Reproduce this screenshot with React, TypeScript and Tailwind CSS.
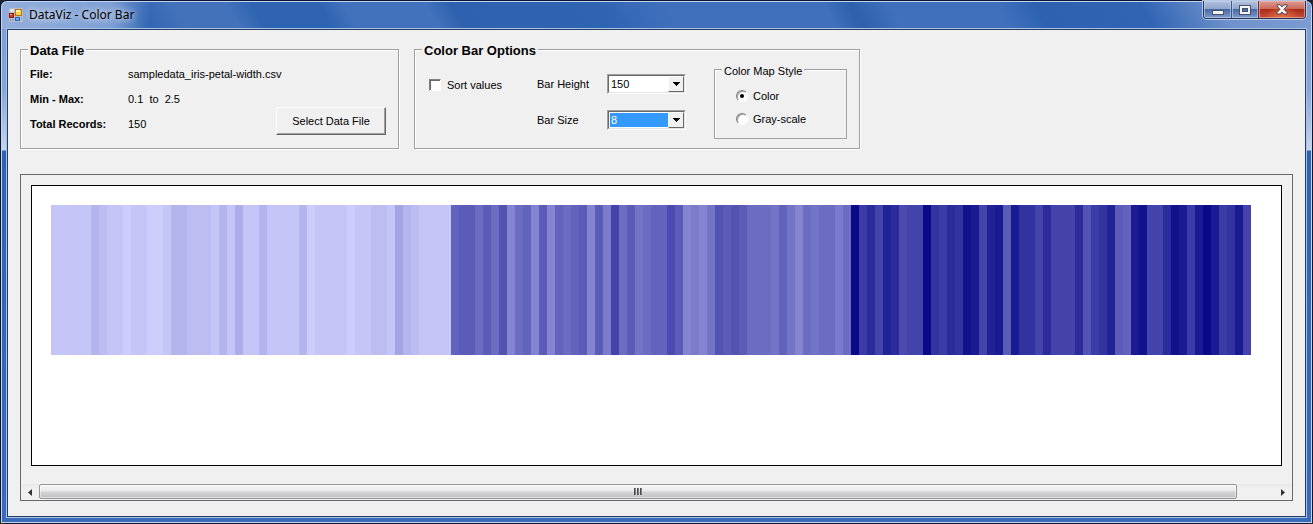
import { useState } from 'react';

const SETOSA = [
  0.2, 0.2, 0.2, 0.2, 0.2, 0.4, 0.3, 0.2, 0.2, 0.1, 0.2, 0.2, 0.1, 0.1, 0.2, 0.4, 0.4, 0.3, 0.3, 0.3, 0.2, 0.4, 0.2, 0.5, 0.2,
  0.2, 0.4, 0.2, 0.2, 0.2, 0.2, 0.4, 0.1, 0.2, 0.2, 0.2, 0.2, 0.1, 0.2, 0.2, 0.3, 0.3, 0.2, 0.6, 0.4, 0.3, 0.2, 0.2, 0.2, 0.2,
];
const VERSICOLOR = [
  1.4, 1.5, 1.5, 1.3, 1.5, 1.3, 1.6, 1.0, 1.3, 1.4, 1.0, 1.5, 1.0, 1.4, 1.3, 1.4, 1.5, 1.0, 1.5, 1.1, 1.8, 1.3, 1.5, 1.2, 1.3,
  1.4, 1.4, 1.7, 1.5, 1.0, 1.1, 1.0, 1.2, 1.6, 1.5, 1.6, 1.5, 1.3, 1.3, 1.3, 1.2, 1.4, 1.2, 1.0, 1.3, 1.2, 1.3, 1.3, 1.1, 1.3,
];
const VIRGINICA = [
  2.5, 1.9, 2.1, 1.8, 2.2, 2.1, 1.7, 1.8, 1.8, 2.5, 2.0, 1.9, 2.1, 2.0, 2.4, 2.3, 1.8, 2.2, 2.3, 1.5, 2.3, 2.0, 2.0, 1.8, 2.1,
  1.8, 1.8, 1.8, 2.1, 1.6, 1.9, 2.0, 2.2, 1.5, 1.4, 2.3, 2.4, 1.8, 1.8, 2.1, 2.4, 2.3, 1.9, 2.3, 2.5, 2.3, 1.9, 2.0, 2.3, 1.8,
];
const VALUES = [...SETOSA, ...VERSICOLOR, ...VIRGINICA];
const MIN = Math.min(...VALUES);
const MAX = Math.max(...VALUES);

function colorFor(value: number, gray: boolean) {
  const t = (value - MIN) / (MAX - MIN);
  const level = Math.round(205 - 195 * t);
  return gray ? `rgb(${level},${level},${level})` : `rgb(${level},${level},${Math.round(252 - 116 * t)})`;
}

function AppIcon() {
  return (
    <svg width="14" height="14" viewBox="0 0 14 14" shapeRendering="crispEdges" aria-hidden="true">
      <rect width="14" height="14" fill="#b9bfc9" />
      <rect x="1" y="1" width="4" height="3" fill="#dfe3ea" />
      <rect x="6" y="1" width="7" height="7" fill="#b07a10" />
      <rect x="7" y="2" width="5" height="5" fill="#f8cf4a" />
      <rect x="7" y="2" width="4" height="2" fill="#fff0a6" />
      <rect x="0" y="5" width="5" height="5" fill="#9c1410" />
      <rect x="1" y="6" width="3" height="3" fill="#d93a2c" />
      <rect x="1" y="6" width="2" height="1" fill="#f5a79c" />
      <rect x="6" y="9" width="5" height="4" fill="#2a62c0" />
      <rect x="7" y="10" width="3" height="2" fill="#6ea6f2" />
      <rect x="1" y="11" width="1" height="2" fill="#7590bd" />
      <rect x="3" y="11" width="2" height="2" fill="#8fa3c6" />
      <rect x="12" y="9" width="1" height="3" fill="#8fa3c6" />
    </svg>
  );
}

function TitleBar() {
  return (
    <header className="flex h-7 items-start justify-between pl-1">
      <div className="flex h-7 items-center gap-1.5 pb-px">
        <AppIcon />
        <h1 className="font-['Noto_Sans',sans-serif] text-[12px] leading-4 text-black [text-shadow:0_0_6px_#ffffffcc,0_0_10px_#ffffffaa]">
          DataViz - Color Bar
        </h1>
      </div>
      <div className="mr-0.5 flex h-[18px] overflow-hidden rounded-b-[4px] border border-t-0 border-[#26365c] shadow-[0_0_0_1px_#b4c8e6]">
        <button
          type="button"
          aria-label="Minimize"
          className="flex w-7 items-center justify-center border-r border-[#3d5687] bg-[linear-gradient(#b3c2dd_0%,#8fa5cd_45%,#4a6aa5_50%,#7d9bcd_100%)] shadow-[inset_0_0_0_1px_#c8d5ea99]"
        >
          <svg width="12" height="12" viewBox="0 0 12 12" shapeRendering="crispEdges" aria-hidden="true">
            <rect x="0.5" y="6.5" width="11" height="4" fill="#f4f4f4" stroke="#46506a" />
          </svg>
        </button>
        <button
          type="button"
          aria-label="Maximize"
          className="flex w-[27px] items-center justify-center border-r border-[#7a2a2a] bg-[linear-gradient(#b3c2dd_0%,#8fa5cd_45%,#4a6aa5_50%,#7d9bcd_100%)] shadow-[inset_0_0_0_1px_#c8d5ea99]"
        >
          <svg width="12" height="10" viewBox="0 0 12 10" shapeRendering="crispEdges" aria-hidden="true">
            <path d="M.5 .5h11v9h-11z M3.5 3.5v3h5v-3z" fillRule="evenodd" fill="#f4f4f4" stroke="#46506a" />
          </svg>
        </button>
        <button
          type="button"
          aria-label="Close"
          className="flex w-[46px] items-center justify-center bg-[radial-gradient(ellipse_at_50%_110%,#e8763f_0%,transparent_55%),linear-gradient(#dd9c92_0%,#cb6a5c_45%,#a92a18_50%,#c6503b_100%)] shadow-[inset_0_0_0_1px_#f0b8a899]"
        >
          <svg width="12" height="11" viewBox="0 0 12 11" aria-hidden="true">
            <path
              d="M1 .8h3.2L6 2.9 7.8 .8H11v1.2L8 5.3l3 3.3v1.4H7.8L6 7.9 4.2 10H1V8.600l3-3.300-3-3.300z"
              fill="#f7f7f7"
              stroke="#4d4658"
            />
          </svg>
        </button>
      </div>
    </header>
  );
}

const GROUP = 'border border-[#a0a0a0] shadow-[1px_1px_0_#fff,inset_1px_1px_0_#fff]';
const GROUP_LEGEND = 'absolute -top-[7px] left-[7px] bg-[#f0f0f0] px-0.5 text-[13px] leading-4 font-bold';

function Field({ label, value }: { label: string; value: string }) {
  return (
    <div className="flex h-[25px] items-start">
      <dt className="w-[98px] font-bold">{label}</dt>
      <dd className="whitespace-pre">{value}</dd>
    </div>
  );
}

function DataFileGroup() {
  return (
    <fieldset className={`relative flex h-[100px] w-[379px] px-[9px] ${GROUP}`}>
      <legend className={GROUP_LEGEND}>Data File</legend>
      <dl className="flex-1 pt-4">
        <Field label="File:" value="sampledata_iris-petal-width.csv" />
        <Field label="Min - Max:" value="0.1  to  2.5" />
        <Field label="Total Records:" value="150" />
      </dl>
      <button
        type="button"
        className="absolute right-3 bottom-[13px] h-7 w-[110px] border border-t-white border-r-[#696969] border-b-[#696969] border-l-white shadow-[inset_-1px_-1px_0_#a0a0a0]"
      >
        Select Data File
      </button>
    </fieldset>
  );
}

function Combo({
  id,
  label,
  value,
  options,
  onChange,
  highlighted = false,
}: {
  id: string;
  label: string;
  value: number;
  options: number[];
  onChange: (n: number) => void;
  highlighted?: boolean;
}) {
  return (
    <div className="flex h-9 items-start">
      <label htmlFor={id} className="w-[70px] pt-0.5">
        {label}
      </label>
      <div className="relative h-5 w-[79px] border border-t-[#a0a0a0] border-r-white border-b-white border-l-[#a0a0a0]">
        <select
          id={id}
          value={value}
          onChange={(e) => onChange(Number(e.target.value))}
          className={`block h-full w-full appearance-none border border-t-[#696969] border-r-[#e3e3e3] border-b-[#e3e3e3] border-l-[#696969] pl-0.5 outline-none ${
            highlighted ? 'bg-[#3399ff] text-white shadow-[inset_0_0_0_1px_#fff]' : 'bg-white text-black'
          }`}
        >
          {options.map((n) => (
            <option key={n} value={n}>
              {n}
            </option>
          ))}
        </select>
        <span className="pointer-events-none absolute top-px right-px bottom-px flex w-4 items-center justify-center border border-t-white border-r-[#696969] border-b-[#696969] border-l-white bg-[#f0f0f0]">
          <svg width="7" height="4" viewBox="0 0 7 4" shapeRendering="crispEdges" aria-hidden="true">
            <path d="M0 0h7v1H0zM1 1h5v1H1zM2 2h3v1H2zM3 3h1v1H3z" />
          </svg>
        </span>
      </div>
    </div>
  );
}

function Radio({ label, checked, onSelect }: { label: string; checked: boolean; onSelect: () => void }) {
  return (
    <label className="flex h-[23px] items-center gap-[5px]">
      <span className="relative h-3 w-3">
        <input
          type="radio"
          name="map-style"
          checked={checked}
          onChange={onSelect}
          className="block h-3 w-3 appearance-none rounded-full border border-t-[#808080] border-r-white border-b-white border-l-[#808080] bg-white shadow-[inset_1px_1px_0_#69696999]"
        />
        {checked && <span className="pointer-events-none absolute top-1 left-1 h-1 w-1 rounded-full bg-black" />}
      </span>
      {label}
    </label>
  );
}

export default function App() {
  const [sorted, setSorted] = useState(false);
  const [height, setHeight] = useState(150);
  const [size, setSize] = useState(8);
  const [gray, setGray] = useState(false);
  const values = sorted ? [...VALUES].sort((a, b) => a - b) : VALUES;

  return (
    <div className="bg-[#20242c] font-['Liberation_Sans',Arial,sans-serif] text-[11px] leading-4 text-black">
      <div className="flex min-h-screen flex-col rounded-[7px] border border-[#0a1430] bg-[linear-gradient(90deg,#93aedb_0px,#7e9fd5_110px,transparent_150px),linear-gradient(60deg,#2f64b2_0%,#2f64b2_11%,#4472ba_14%,#4472ba_18%,#2f64b2_20%,#2f64b2_25%,#4272bc_27%,#4272bc_33%,#2f62ae_35%,#2f64b2_46%,#4070bc_51%,#4070bc_63%,#2e60ac_65%,#4070bc_68%,#4070bc_76%,#2e62b0_79%,#3165b4_87%,#7092cc_93%,#7d9dd2_100%)] bg-[length:100%_28px,100%_28px] bg-no-repeat px-1 shadow-[inset_0_0_0_1px_#c2d4ee]">
        <TitleBar />
        <div className="-mx-1 flex flex-1 flex-col bg-[linear-gradient(#7d9fd4_0px,#86a5d8_60px,#c7d5ed_121px,#2f62b0_122px,#3b6bb8_100%)] px-[6px] pb-[6px] shadow-[inset_1px_0_0_#c2d4ee,inset_-1px_-1px_0_#c2d4ee]">
          <main className="flex flex-1 flex-col border border-[#243c66] bg-[#f0f0f0] px-3 pt-[19px] pb-[15px] shadow-[0_0_0_1px_#a8c4e4]">
            <div className="flex items-start gap-[15px]">
              <DataFileGroup />
              <fieldset className={`relative flex h-[100px] w-[446px] items-start ${GROUP}`}>
                <legend className={GROUP_LEGEND}>Color Bar Options</legend>
                <label className="ml-3.5 flex w-[108px] items-center gap-1.5 pt-[27px]">
                  <input
                    type="checkbox"
                    checked={sorted}
                    onChange={(e) => setSorted(e.target.checked)}
                    className="h-3 w-3 appearance-none border border-t-[#808080] border-r-white border-b-white border-l-[#808080] bg-white shadow-[inset_1px_1px_0_#696969] checked:bg-[#3399ff]"
                  />
                  Sort values
                </label>
                <div className="pt-6">
                  <Combo id="bar-height" label="Bar Height" value={height} options={[50, 100, 150, 200]} onChange={setHeight} />
                  <Combo id="bar-size" label="Bar Size" value={size} options={[1, 2, 4, 8]} onChange={setSize} highlighted />
                </div>
                <fieldset className="relative mt-[19px] ml-7 h-[70px] w-[133px] border border-[#a0a0a0] pt-3.5 pl-[21px] shadow-[inset_1px_1px_0_#fff]">
                  <legend className="absolute -top-[7px] left-[7px] bg-[#f0f0f0] px-0.5 leading-4">Color Map Style</legend>
                  <Radio label="Color" checked={!gray} onSelect={() => setGray(false)} />
                  <Radio label="Gray-scale" checked={gray} onSelect={() => setGray(true)} />
                </fieldset>
              </fieldset>
            </div>
            <section aria-label="Color bar" className="mt-[25px] flex flex-1 flex-col border border-[#696969]">
              <div className="mx-2.5 mt-2.5 mb-[18px] flex-1 overflow-hidden border border-black bg-white py-[19px] pl-[19px]">
                <div className="flex" style={{ height }}>
                  {values.map((v, i) => (
                    <div key={i} className="shrink-0" style={{ width: size, backgroundColor: colorFor(v, gray) }} />
                  ))}
                </div>
              </div>
              <div className="flex h-4 items-center bg-[linear-gradient(#e8e8e8,#f0f0f0_30%)]">
                <button type="button" aria-label="Scroll left" className="flex h-4 w-[18px] items-center justify-center">
                  <svg width="4" height="7" viewBox="0 0 4 7" aria-hidden="true">
                    <path d="M4 0v7L0 3.5z" fill="#333" />
                  </svg>
                </button>
                <div className="flex h-full flex-1 pr-[37px]">
                  <div className="flex h-[15px] flex-1 items-center justify-center gap-px rounded-[2px] border border-[#979797] bg-[linear-gradient(#f5f5f5_0%,#e9e9eb_48%,#d4d4d6_52%,#c0c0c4_100%)] shadow-[inset_0_0_0_1px_#ffffff80]">
                    <i className="h-[7px] w-0.5 bg-gradient-to-r from-[#333] to-[#999]" />
                    <i className="h-[7px] w-0.5 bg-gradient-to-r from-[#333] to-[#999]" />
                    <i className="h-[7px] w-0.5 bg-gradient-to-r from-[#333] to-[#999]" />
                  </div>
                </div>
                <button type="button" aria-label="Scroll right" className="flex h-4 w-[18px] items-center justify-center">
                  <svg width="4" height="7" viewBox="0 0 4 7" aria-hidden="true">
                    <path d="M0 0v7l4-3.5z" fill="#333" />
                  </svg>
                </button>
              </div>
            </section>
          </main>
        </div>
      </div>
    </div>
  );
}
